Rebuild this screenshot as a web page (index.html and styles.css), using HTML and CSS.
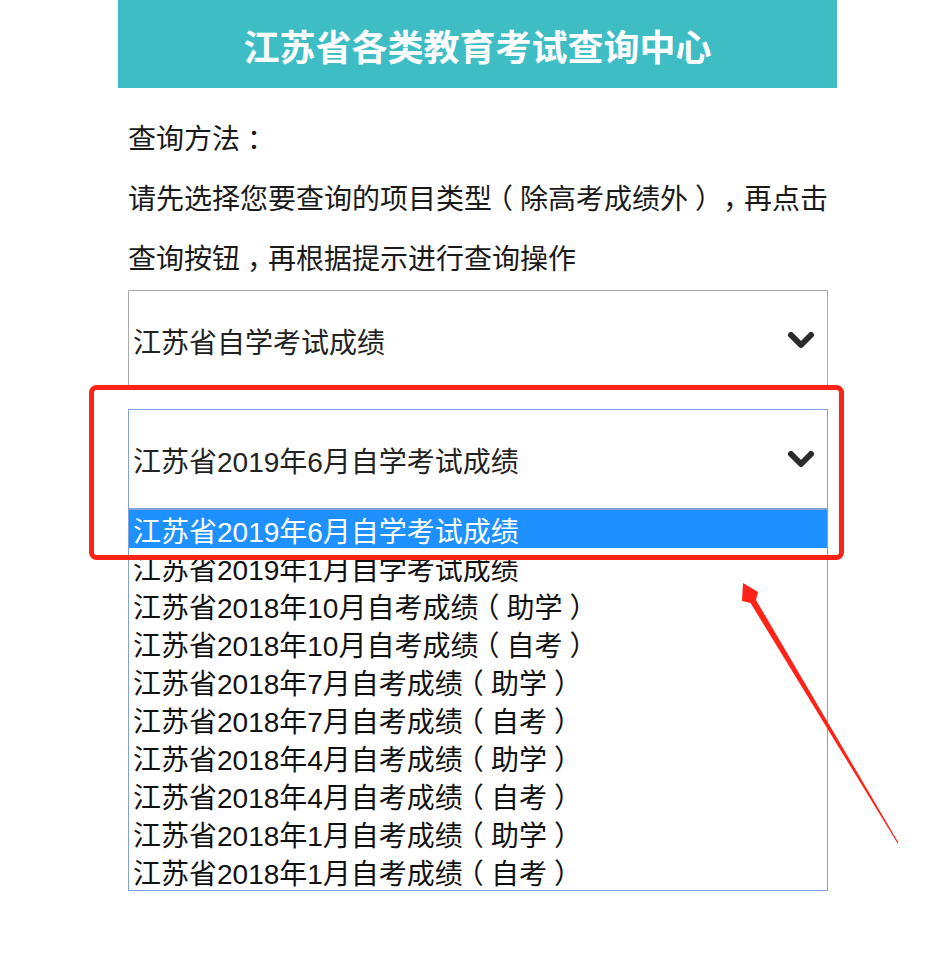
FILE: index.html
```html
<!DOCTYPE html>
<html lang="zh-CN">
<head>
<meta charset="utf-8">
<title>江苏省各类教育考试查询中心</title>
<link rel="stylesheet" href="styles.css">
</head>
<body>
<div class="page">
  <header class="banner">
    <h1 class="banner-title">江苏省各类教育考试查询中心</h1>
  </header>
  <main class="content">
    <p class="line">查询方法<span class="fw">：</span></p>
    <p class="line">请先选择您要查询的项目类型<span class="fw">（</span>除高考成绩外<span class="fw">）</span><span class="fw">，</span>再点击</p>
    <p class="line">查询按钮<span class="fw">，</span>再根据提示进行查询操作</p>

    <div class="select">
      <span class="select-text">江苏省自学考试成绩</span>
      <svg class="chev" width="26" height="18" viewBox="0 0 26 18"><path d="M3 3 L13 13 L23 3" fill="none" stroke="#2b2b2b" stroke-width="6" stroke-linecap="round" stroke-linejoin="round"/></svg>
    </div>

    <div class="select select-focus">
      <span class="select-text">江苏省2019年6月自学考试成绩</span>
      <svg class="chev" width="26" height="18" viewBox="0 0 26 18"><path d="M3 3 L13 13 L23 3" fill="none" stroke="#2b2b2b" stroke-width="6" stroke-linecap="round" stroke-linejoin="round"/></svg>
    </div>
    <ul class="options">
      <li class="opt opt-active">江苏省2019年6月自学考试成绩</li>
      <li class="opt">江苏省2019年1月自学考试成绩</li>
      <li class="opt">江苏省2018年10月自考成绩<span class="fw">（</span>助学<span class="fw">）</span></li>
      <li class="opt">江苏省2018年10月自考成绩<span class="fw">（</span>自考<span class="fw">）</span></li>
      <li class="opt">江苏省2018年7月自考成绩<span class="fw">（</span>助学<span class="fw">）</span></li>
      <li class="opt">江苏省2018年7月自考成绩<span class="fw">（</span>自考<span class="fw">）</span></li>
      <li class="opt">江苏省2018年4月自考成绩<span class="fw">（</span>助学<span class="fw">）</span></li>
      <li class="opt">江苏省2018年4月自考成绩<span class="fw">（</span>自考<span class="fw">）</span></li>
      <li class="opt">江苏省2018年1月自考成绩<span class="fw">（</span>助学<span class="fw">）</span></li>
      <li class="opt">江苏省2018年1月自考成绩<span class="fw">（</span>自考<span class="fw">）</span></li>
    </ul>
  </main>
</div>
<svg class="annot" width="937" height="956" viewBox="0 0 937 956">
  <rect x="91.5" y="387.5" width="750" height="170" rx="5" ry="5" fill="none" stroke="#ff2317" stroke-width="5"/>
  <polygon points="743,583 758,592 756,600 898.5,842.7 897.5,843.3 750.5,603 742,601" fill="#ff2317"/>
</svg>
</body>
</html>
```

FILE: styles.css
```css
html, body {
  margin: 0;
  padding: 0;
  background: #ffffff;
}
body {
  position: relative;
  width: 937px;
  height: 956px;
  overflow: hidden;
  font-family: "Liberation Sans", "Noto Sans CJK SC", sans-serif;
  color: #111;
}
.page {
  width: 719px;
  margin-left: 118px;
}
.banner {
  height: 88px;
  background: #3fbdc4;
  display: flex;
  align-items: center;
  justify-content: center;
}
.banner-title {
  margin: 0;
  color: #ffffff;
  font-family: "Noto Sans CJK SC", sans-serif;
  font-weight: 700;
  font-size: 36px;
  line-height: 1;
  padding-top: 2px;
}
.content {
  padding: 22px 9px 0 10px;
}
.line {
  margin: 0;
  font-size: 28px;
  line-height: 60px;
  height: 60px;
  white-space: nowrap;
  color: #1a1a1a;
}
.fw {
  display: inline-block;
  width: 1em;
  text-align: center;
  font-feature-settings: "halt";
}
.select {
  box-sizing: border-box;
  height: 100px;
  width: 700px;
  border: 1px solid #a9a9a9;
  display: flex;
  align-items: center;
  justify-content: space-between;
  padding: 2px 13px 0 4px;
  margin-bottom: 19px;
}
.select-focus {
  border-color: #7fa2dd;
  margin-bottom: 0;
}
.select-text {
  font-size: 28px;
  color: #222;
  white-space: nowrap;
}
.chev {
  display: block;
}
.options {
  list-style: none;
  margin: 0;
  padding: 0;
  width: 700px;
  box-sizing: border-box;
  border: 1px solid #7fa2dd;
}
.opt {
  box-sizing: border-box;
  height: 38px;
  line-height: 38px;
  padding-top: 4px;
  font-size: 28px;
  padding-left: 4px;
  white-space: nowrap;
  color: #111;
}
.opt-active {
  background: #1e90ff;
  color: #ffffff;
}
.annot {
  position: absolute;
  left: 0;
  top: 0;
  pointer-events: none;
}
```
